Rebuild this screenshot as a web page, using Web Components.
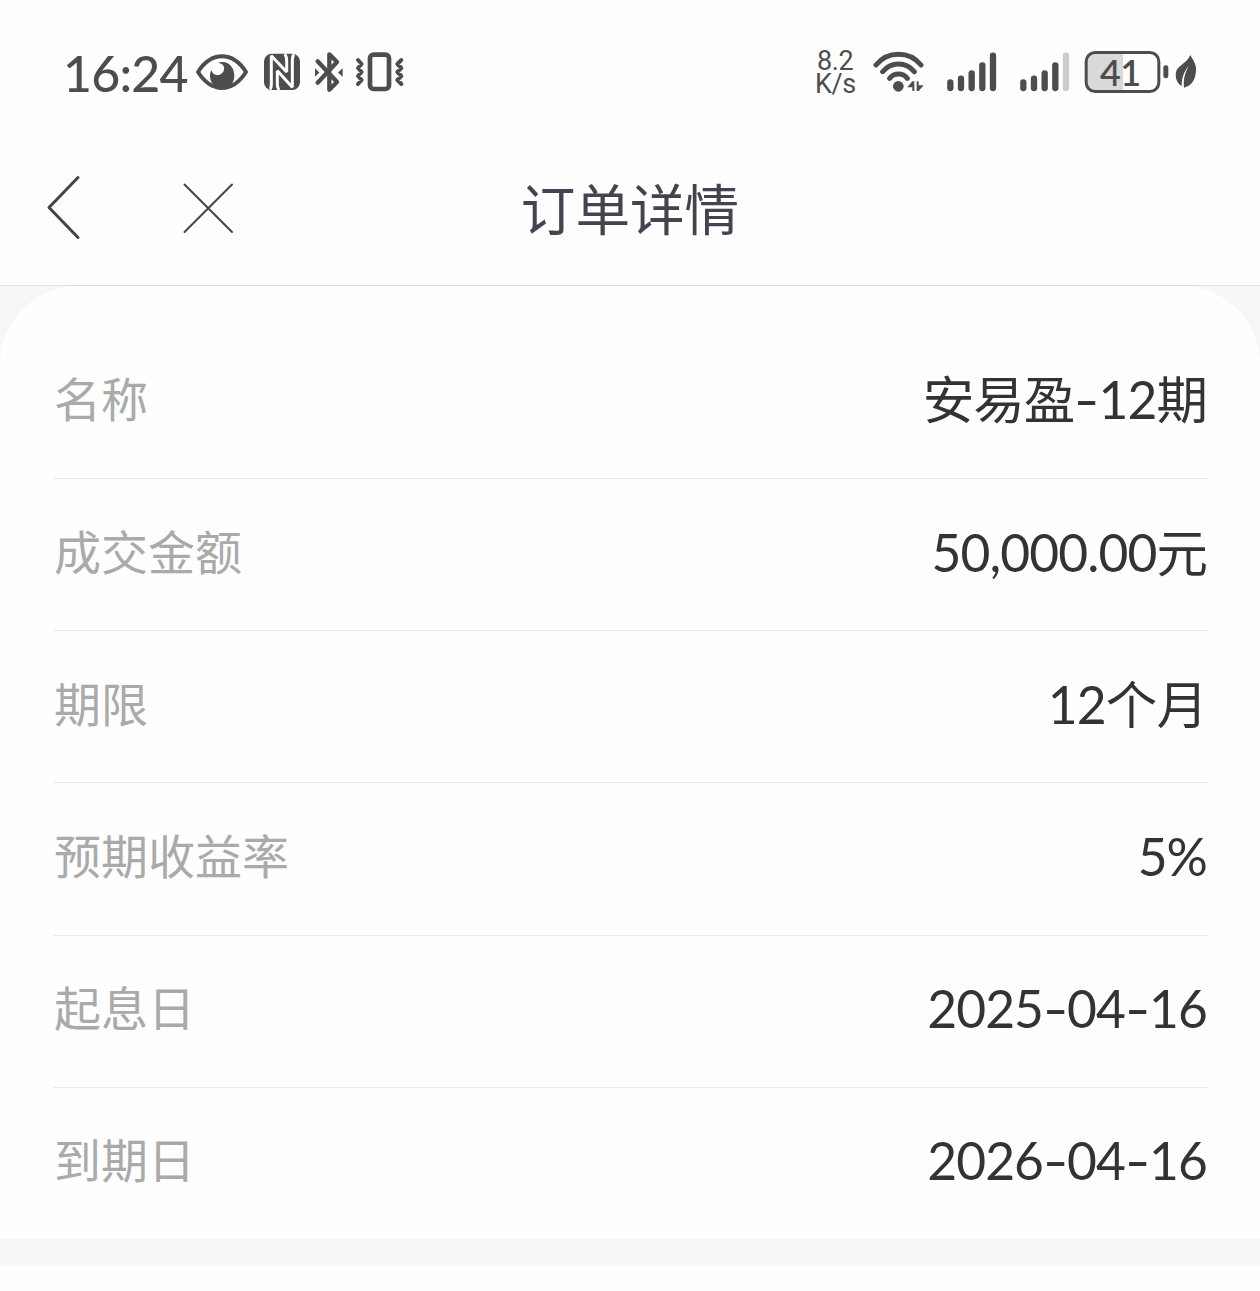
<!DOCTYPE html>
<html lang="zh-CN">
<head>
<meta charset="UTF-8">
<meta name="viewport" content="width=device-width, initial-scale=1.0">
<title>订单详情</title>
<style>
    body {
        margin: 0;
        background-color: #fefefe;
        font-family: Lato, "Noto Sans CJK SC", sans-serif;
    }
</style>
</head>
<body>
<order-page>
    <status-bar slot="top"></status-bar>
    <nav-header slot="top">订单详情</nav-header>
    <detail-card>
        <detail-row label="名称">安易盈<i>-</i>12期</detail-row>
        <detail-row label="成交金额">50,000.00元</detail-row>
        <detail-row label="期限">12个月</detail-row>
        <detail-row label="预期收益率">5%</detail-row>
        <detail-row label="起息日">2025<i>-</i>04<i>-</i>16</detail-row>
        <detail-row label="到期日">2026<i>-</i>04<i>-</i>16</detail-row>
    </detail-card>
</order-page>

<script>
class OrderPage extends HTMLElement {
    connectedCallback() {
        this.attachShadow({ mode: 'open' });
        this.shadowRoot.innerHTML = `
            <style>
                :host {
                    display: flex;
                    flex-direction: column;
                    height: 1291px;
                    overflow: hidden;
                }
                main {
                    background-color: #f7f7f7;
                    padding-bottom: 27px;
                }
            </style>
            <slot name="top"></slot>
            <main><slot></slot></main>
        `;
    }
}

class StatusBar extends HTMLElement {
    connectedCallback() {
        this.attachShadow({ mode: 'open' });
        this.shadowRoot.innerHTML = `
            <style>
                :host {
                    display: flex;
                    justify-content: space-between;
                    align-items: center;
                    box-sizing: border-box;
                    height: 144px;
                    padding: 0 63px 0 63px;
                    color: #4d4d4d;
                }
                .group {
                    display: flex;
                    align-items: center;
                }
                svg {
                    display: block;
                    flex: none;
                    fill: currentColor;
                }
                .line {
                    fill: none;
                    stroke: currentColor;
                    stroke-linecap: round;
                    stroke-linejoin: round;
                }
                .time {
                    width: 132px;
                    padding-top: 2px;
                    font-size: 50px;
                    font-weight: 500;
                    line-height: 60px;
                    letter-spacing: -0.8px;
                    white-space: nowrap;
                }
                .speed {
                    width: 58px;
                    padding-top: 2px;
                    font: 27px/23px Roboto, sans-serif;
                    letter-spacing: -0.4px;
                }
                .speed div:first-child {
                    padding-left: 2px;
                }
                .wifi {
                    margin-right: 17px;
                }
                .battery {
                    display: grid;
                    align-items: center;
                }
                .battery > * {
                    grid-area: 1 / 1;
                }
                .level {
                    padding-left: 17px;
                    font-size: 36px;
                    font-weight: 600;
                    line-height: 42px;
                    letter-spacing: -0.6px;
                }
            </style>
            <div class="group">
                <span class="time">16:24</span>
                <!-- eye comfort, NFC, bluetooth, vibrate -->
                <svg width="210" height="42" viewBox="15 33 630 126">
                    <path class="line" stroke-width="12" d="M24 96C42 68 66 49 96 49S150 68 168 96C150 124 126 144 96 144S42 124 24 96Z"/>
                    <path d="M84 68C112 59 133 80 133 107C133 130 117 146 97 146S60 130 60 108C60 101 61 96 64 91C67 102 76 107 86 105C98 102 104 92 102 82C101 75 96 70 84 68Z"/>
                    <rect x="222" y="41" width="108" height="109" rx="23"/>
                    <path fill="none" stroke="#fefefe" stroke-width="9" stroke-linejoin="bevel" d="M240 148Q244 144 244 130V47L290 96V62Q290 48 284 42M268 150Q262 146 262 130V92L307 142V62Q307 48 312 43"/>
                    <path class="line" stroke-width="13" d="M383 64L441 126L418 149V43L441 66L383 128"/>
                    <path d="M375 85V110L388 97.500ZM458 85V110L444 97.500Z"/>
                    <rect class="line" stroke-width="14" x="540" y="44" width="57" height="103" rx="11"/>
                    <path class="line" stroke-width="12" d="M504 60L515 72L504 84L515 96L504 108L515 120L504 132M634 60L622 72L634 84L622 96L634 108L622 120L634 132"/>
                </svg>
            </div>
            <div class="group">
                <div class="speed"><div>8.2</div><div>K/s</div></div>
                <svg class="wifi" width="128" height="44" viewBox="219 45 384 132">
                    <g class="line" stroke-width="15">
                        <path d="M228 90A87 87 0 0 1 363 90M248 110A60 60 0 0 1 343 110M269 130A34 34 0 0 1 322 130"/>
                    </g>
                    <circle cx="295" cy="154" r="16"/>
                    <path d="M322 157L337 139H343V168H337V157ZM350 168V139H356V151H371L356 168Z"/>
                    <g class="line" stroke-width="19">
                        <path d="M451 142V159M483 131V159M515 115V159M547 91V159M579 62V159"/>
                    </g>
                </svg>
                <svg width="65" height="44" viewBox="39 45 195 132">
                    <g class="line" stroke-width="19">
                        <path d="M55 142V159M87 131V159M119 115V159M151 91V159"/>
                        <path stroke="#cccccc" d="M183 62V159"/>
                    </g>
                </svg>
                <div class="battery">
                    <svg width="114" height="44" viewBox="234 45 342 132">
                        <path fill="#d9d9d9" d="M354 52V170H270Q244 170 244 144V78Q244 52 270 52Z"/>
                        <rect class="line" stroke-width="9" x="243.500" y="52.500" width="218" height="117" rx="27"/>
                        <rect x="475" y="91" width="15" height="39" rx="7"/>
                        <path d="M556 60C566 78 575 90 573 108C571 134 560 153 537 158C534 135 540 113 551 94C538 108 530 128 530 154C516 145 510 129 513 112C516 91 545 87 556 60Z"/>
                    </svg>
                    <span class="level">41</span>
                </div>
            </div>
        `;
    }
}

class NavHeader extends HTMLElement {
    connectedCallback() {
        this.attachShadow({ mode: 'open' });
        this.shadowRoot.innerHTML = `
            <style>
                :host {
                    display: grid;
                    grid-template-columns: 1fr auto 1fr;
                    align-items: center;
                    box-sizing: border-box;
                    height: 142px;
                    padding: 0 45px 14px;
                    border-bottom: 1px solid #dfdfdf;
                    color: #44434f;
                }
                .actions {
                    display: flex;
                    align-items: center;
                    gap: 99px;
                }
                svg {
                    fill: none;
                    stroke: currentColor;
                    stroke-linecap: round;
                    stroke-linejoin: round;
                }
                h1 {
                    margin: 0;
                    padding-top: 2px;
                    font-size: 54.6px;
                    font-weight: 400;
                    line-height: 80px;
                }
            </style>
            <div class="actions">
                <svg width="37" height="66" viewBox="0 0 37 66"><path stroke-width="3" d="M33 2.500L4 32.500L33 62.500"/></svg>
                <svg width="54" height="54" viewBox="0 0 54 54"><path stroke-width="2" d="M3.500 3.500L51 51M51 3.500L3.500 51"/></svg>
            </div>
            <h1><slot></slot></h1>
        `;
    }
}

class DetailCard extends HTMLElement {
    connectedCallback() {
        this.attachShadow({ mode: 'open' });
        this.shadowRoot.innerHTML = `
            <style>
                :host {
                    display: block;
                    padding: 40.8px 53px 0 54px;
                    border-radius: 78px 78px 0 0;
                    background-color: #fefefe;
                }
                ::slotted(:last-child) {
                    --divider: transparent;
                    --row-height: 151.2px;
                }
            </style>
            <slot></slot>
        `;
    }
}

class DetailRow extends HTMLElement {
    connectedCallback() {
        this.attachShadow({ mode: 'open' });
        this.shadowRoot.innerHTML = `
            <style>
                :host {
                    display: flex;
                    justify-content: space-between;
                    align-items: center;
                    box-sizing: border-box;
                    height: var(--row-height, 152.2px);
                    padding-bottom: 6px;
                    border-bottom: 1px solid var(--divider, #e9e9e9);
                }
                .label {
                    color: #aaaaaa;
                    font-size: 47px;
                    line-height: 70px;
                }
                .value {
                    color: #333333;
                    font-size: 51.5px;
                    line-height: 76px;
                    letter-spacing: -0.9px;
                }
                /* wider dash between digit groups */
                ::slotted(i) {
                    display: inline-block;
                    width: 24px;
                    font-style: normal;
                    text-align: center;
                    transform: scaleX(1.35);
                }
            </style>
            <span class="label">${this.getAttribute('label')}</span>
            <span class="value"><slot></slot></span>
        `;
    }
}

customElements.define('order-page', OrderPage);
customElements.define('status-bar', StatusBar);
customElements.define('nav-header', NavHeader);
customElements.define('detail-card', DetailCard);
customElements.define('detail-row', DetailRow);
</script>
</body>
</html>
